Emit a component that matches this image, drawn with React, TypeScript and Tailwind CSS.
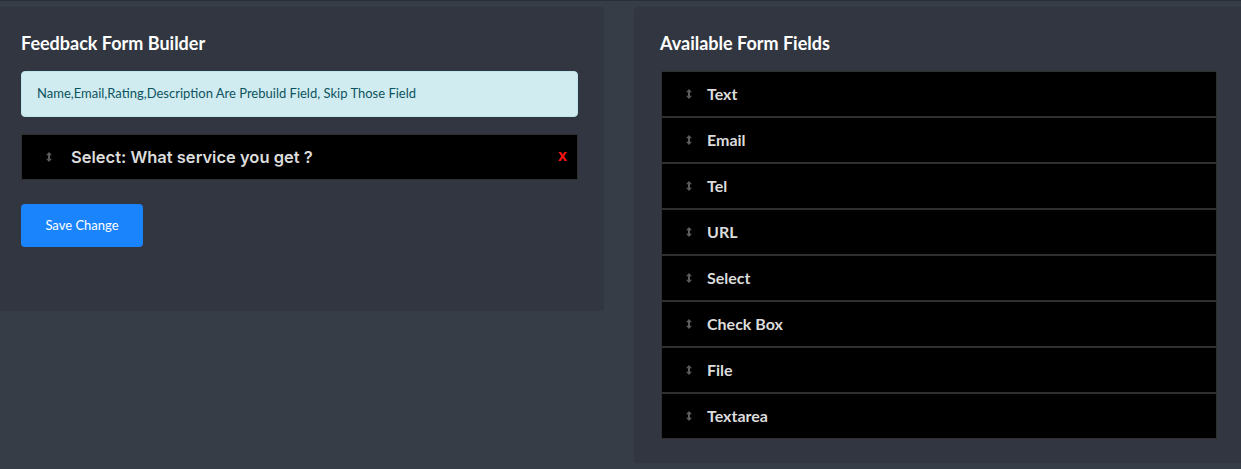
const fields = ['Text', 'Email', 'Tel', 'URL', 'Select', 'Check Box', 'File', 'Textarea']

function DragHandle() {
  return (
    <svg className="h-[10px] w-[6px] shrink-0" viewBox="0 0 6 10" fill="#5c5c5c">
      <path d="M3 0 L6 3.2 H4 V6.8 H6 L3 10 L0 6.8 H2 V3.2 H0 Z" />
    </svg>
  )
}

export default function App() {
  return (
    <div className="flex h-[469px] w-[1241px] gap-[30px] overflow-hidden border-t border-[#2a2f37] bg-[#373d47] pt-[6px] font-['Lato','Liberation_Sans',sans-serif]">
      <div className="h-[304px] w-[604px] shrink-0 rounded-br-[4px] rounded-tr-[4px] bg-[#313640] pl-[21px] pr-[26px] pt-[26px]">
        <h2 className="text-[18px] font-bold leading-[20px] text-white">Feedback Form Builder</h2>
        <div className="mt-[18px] flex h-[46px] items-center rounded-[4px] border border-[#bee5eb] bg-[#d1ecf1] px-[15px] text-[13px] text-[#0c5460]">
          Name,Email,Rating,Description Are Prebuild Field, Skip Those Field
        </div>
        <div className="mt-[17px] flex h-[46px] items-center border border-[#2e2e2e] bg-black pl-[24px] pr-[10px]">
          <DragHandle />
          <span className="ml-[19px] font-['Inter','Liberation_Sans',sans-serif] text-[16.5px] font-semibold text-[#dcdcdc]">
            Select: What service you get ?
          </span>
          <span className="ml-auto pb-[2px] font-['Liberation_Sans',sans-serif] text-[16px] font-bold leading-none text-[#ff1414]">
            x
          </span>
        </div>
        <button className="mt-[24px] h-[43px] w-[122px] rounded-[4px] bg-[#1a84fc] text-[13px] text-white">
          Save Change
        </button>
      </div>

      <div className="h-[456px] flex-1 rounded-tl-[4px] rounded-bl-[4px] bg-[#313640] pl-[27px] pr-[24px] pt-[26px]">
        <h2 className="-ml-[1px] text-[18px] font-bold leading-[20px] text-white">Available Form Fields</h2>
        <div className="mt-[18px] flex flex-col">
          {fields.map((f) => (
            <div
              key={f}
              className="flex h-[46px] items-center border border-[#2f2f2f] bg-black pl-[24px]"
            >
              <DragHandle />
              <span className="ml-[15px] text-[16px] font-bold text-[#dcdcdc]">{f}</span>
            </div>
          ))}
        </div>
      </div>
    </div>
  )
}
